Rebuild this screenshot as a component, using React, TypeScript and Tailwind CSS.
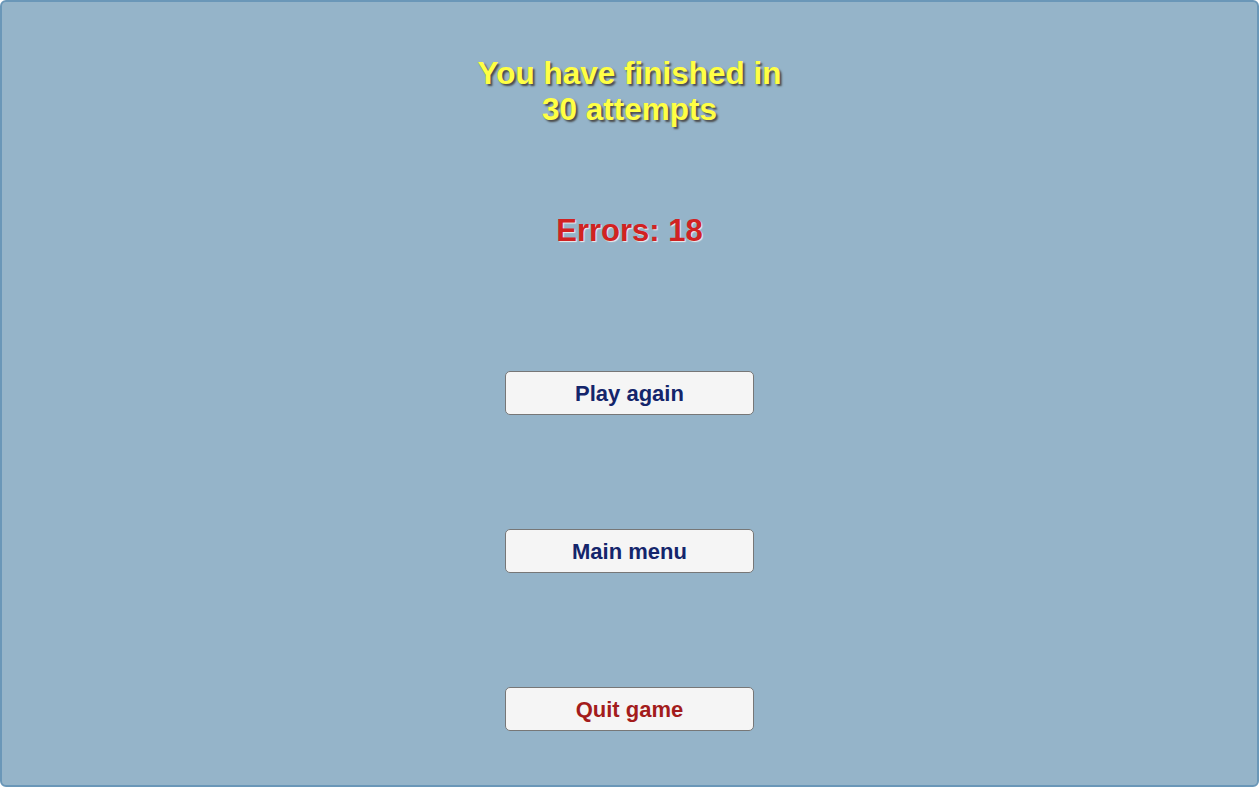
export default function App() {
  const buttons = [
    { label: "Play again", color: "text-[#14256b]" },
    { label: "Main menu", color: "text-[#14256b]" },
    { label: "Quit game", color: "text-[#a31c1c]" },
  ];

  return (
    <div className="h-[787px] w-[1259px] p-0 font-['Liberation_Sans',Arial,sans-serif]">
      <div className="flex h-full flex-col items-center rounded-md border-2 border-[#6a97b8] bg-[#95b4c9]">
        <h1 className="mt-[53px] text-center text-[31.5px] font-bold leading-[36px] text-[#ffff44] [text-shadow:2px_2px_2px_#4a4a4a]">
          You have finished in
          <br />
          30 attempts
        </h1>

        <p className="mt-[86px] text-[31px] font-bold leading-[36px] text-[#d12222] [text-shadow:1px_1px_1px_#eee]">
          Errors: 18
        </p>

        <div className="mt-[122px] flex flex-col gap-[114px]">
          {buttons.map((b) => (
            <button
              key={b.label}
              className={`h-[44px] w-[249px] rounded-[5px] border border-[#777] bg-[#f5f5f5] text-[22px] font-bold ${b.color}`}
            >
              {b.label}
            </button>
          ))}
        </div>
      </div>
    </div>
  );
}
